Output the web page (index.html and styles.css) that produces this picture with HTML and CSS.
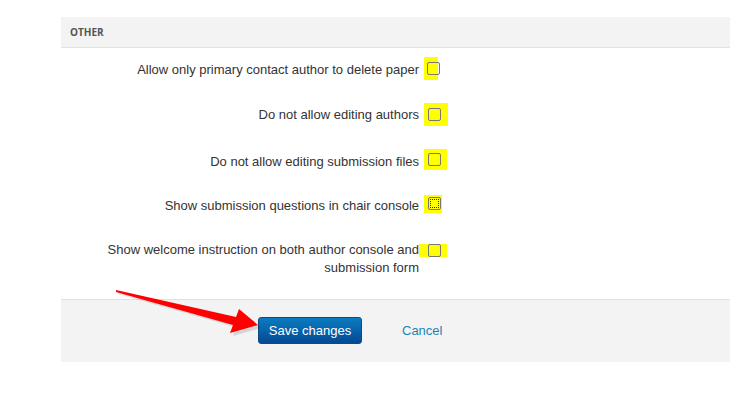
FILE: index.html
```html
<!DOCTYPE html>
<html lang="en">
<head>
    <meta charset="UTF-8">
    <title>Settings - Other</title>
    <link rel="stylesheet" href="styles.css">
</head>
<body>

<div class="panel">
    <div class="panel-head">OTHER</div>

    <div class="row">
        <label class="row-label">Allow only primary contact author to delete paper</label>
        <span class="mark mark-1"><span class="box"></span></span>
    </div>
    <div class="row">
        <label class="row-label">Do not allow editing authors</label>
        <span class="mark mark-2"><span class="box"></span></span>
    </div>
    <div class="row">
        <label class="row-label">Do not allow editing submission files</label>
        <span class="mark mark-3"><span class="box"></span></span>
    </div>
    <div class="row">
        <label class="row-label">Show submission questions in chair console</label>
        <span class="mark mark-4"><span class="box focused"></span></span>
    </div>
    <div class="row">
        <label class="row-label">Show welcome instruction on both author console and submission form</label>
        <span class="mark mark-5"><span class="box"></span></span>
    </div>

    <div class="actions">
        <button class="btn-save" type="button">Save changes</button>
        <a class="btn-cancel" href="#">Cancel</a>
    </div>
</div>

<svg class="arrow" width="160" height="60" viewBox="0 0 160 60">
    <polygon class="arrow-shadow" points="2,7 122,34 125,26 145,43 117,51 119,42 2,9"/>
    <polygon class="arrow-body" points="0,5 120,32 123,24 142,40 114,48 117,40 0,7"/>
</svg>

</body>
</html>
```

FILE: styles.css
```css
body {
    margin: 0;
    background: #fff;
    font-family: 'Liberation Sans', Arial, sans-serif;
    color: #333;
    position: relative;
    width: 730px;
    height: 394px;
    overflow: hidden;
}

.panel {
    margin: 17px 0 0 61px;
}

.panel-head {
    height: 30px;
    line-height: 30px;
    padding-left: 9px;
    background: #f3f3f3;
    border-bottom: 1px solid #e2e2e2;
    font-family: 'Open Sans', 'Liberation Sans', sans-serif;
    font-size: 10px;
    font-weight: bold;
    color: #555;
}

.row {
    display: flex;
    align-items: flex-start;
    padding: 13px 0 13.25px;
}

.row-label {
    width: 358px;
    text-align: right;
    font-size: 13px;
    line-height: 18px;
}

.mark {
    display: flex;
    align-items: center;
    justify-content: flex-start;
    background: #ffff00;
    box-sizing: border-box;
}

.mark-1 { width: 14px; height: 23px; margin: -4px 0 0 5px; padding-left: 3px; }
.mark-2 { width: 24px; height: 23px; margin: -3px 0 0 5px; padding-left: 4px; }
.mark-3 { width: 23px; height: 21px; margin: -4px 0 0 5px; padding-left: 4px; }
.mark-4 { width: 18px; height: 18px; margin: -2px 0 0 5px; padding-left: 4px; }
.mark-5 { width: 28px; height: 13px; margin: 3px 0 0 0; padding-left: 9px; }

.box {
    width: 11px;
    height: 11px;
    border: 1px solid #777;
    border-radius: 2px;
    background: transparent;
    flex: none;
}

.box.focused {
    outline: 1px dotted #333;
    outline-offset: -3px;
}

.actions {
    margin-top: 9px;
    height: 63px;
    background: #f3f3f3;
    border-top: 1px solid #e0e0e0;
    display: flex;
    align-items: flex-start;
    padding: 17px 0 0 197px;
    box-sizing: border-box;
}

.btn-save {
    width: 104px;
    height: 27px;
    padding: 0;
    border: 1px solid #0b4c86;
    border-radius: 3px;
    background: linear-gradient(#0b7bc0, #034a93);
    color: #fff;
    font-family: 'Liberation Sans', Arial, sans-serif;
    font-size: 13px;
}

.btn-cancel {
    margin-left: 40px;
    line-height: 27px;
    font-size: 13px;
    color: #1a84b8;
    text-decoration: none;
}

.arrow {
    position: absolute;
    left: 116px;
    top: 285px;
}

.arrow-body {
    fill: #ff0000;
}

.arrow-shadow {
    fill: rgba(0, 0, 0, 0.12);
}
```
